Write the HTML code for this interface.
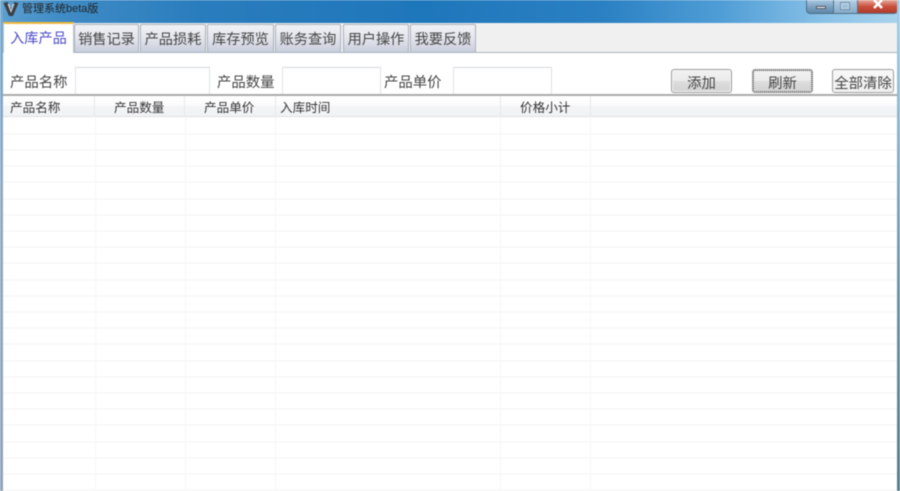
<!DOCTYPE html>
<html lang="zh">
<head>
<meta charset="utf-8">
<title>管理系统beta版</title>
<style>
html,body{margin:0;padding:0;width:900px;height:491px;overflow:hidden;background:#fff}
body{position:relative;font-family:"Liberation Sans","Noto Sans CJK SC",sans-serif;color:#333}
#wrap{left:0;top:0;width:900px;height:491px;filter:blur(.4px)}
div,span{position:absolute;box-sizing:border-box;white-space:nowrap}
#title{left:0;top:0;width:900px;height:23px;background:linear-gradient(90deg,#5c9fcf 0,#3f8cc6 60px,#2a7dbd 200px,#1f77bb 420px,#2a80c2 600px,#4f9dd6 720px,#8cc3e8 830px,#a9d3ee 900px)}
#cap{left:22px;top:2px;font-size:11px;line-height:14px;color:#222}
.lb{left:0;top:0;width:3px;height:491px;background:linear-gradient(180deg,#6fa8d2,#8fa9c4 40%,#8fa3bb);}
.rb{left:897px;top:0;width:3px;height:491px;background:linear-gradient(180deg,#a5cfea,#6d93a8 60%,#567d90);}
#strip{left:3px;top:23px;width:894px;height:30px;background:#f0f0f0;border-bottom:1px solid #a9b4bf}
#client{left:3px;top:53px;width:894px;height:438px;background:#fff}
.tab{top:24px;height:28px;background:linear-gradient(180deg,#f1f2f6 0,#e3e5ec 50%,#c9cddc 100%);border:1px solid #aab1bc;border-bottom:0;border-radius:2px 2px 0 0;font-size:14.2px;line-height:30px;text-align:center;color:#444}
#act{left:3px;top:22px;width:71px;height:31px;background:#fff;border:1px solid #c2c6cc;border-top:2px solid #f0b93c;border-bottom:0;font-size:14.2px;line-height:31px;text-align:center;color:#4a4ac8}
.l{top:74px;font-size:14.4px;line-height:18px;color:#444}
.in{top:67px;height:28px;background:#fff;border:1px solid #dfe2e6;border-bottom:0;border-top-color:#d4d7db}
.btn{top:69px;height:24px;border:1px solid #9a9b9b;border-radius:3px;background:linear-gradient(180deg,#f2f2f2 0,#ebebeb 48%,#dddddd 52%,#d2d2d2 100%);font-size:14.4px;line-height:28px;text-align:center;color:#444;box-shadow:inset 0 0 0 1px #f6f6f6}
#hl{left:3px;top:94px;width:894px;height:2px;background:#ababab}
#hd{left:3px;top:96px;width:894px;height:21px;background:linear-gradient(180deg,#ffffff 0,#fbfbfc 45%,#f3f4f6 55%,#f2f3f5 100%);border-bottom:1px solid #dfe0e2}
.h{top:100px;font-size:12.6px;line-height:16px;color:#333}
.vh{top:96px;width:1px;height:21px;background:#e6e8eb}
.v{top:117px;width:1px;height:374px;background:#f6f6f6}
.r{left:3px;width:894px;height:2px;background:#f8f8f8}
</style>
</head>
<body>
<div id="wrap">
<div id="title"></div>
<svg style="position:absolute;left:3px;top:1px" width="16" height="16" viewBox="0 0 16 16">
<path d="M0.5 2 L4.5 1 L8 7 L11.5 1 L15.5 2 L10 15 L6 15 Z" fill="#3a3e45"/>
<path d="M4.5 3 L6.5 3 L8 9 L9.5 3 L11.5 3 L8 12 Z" fill="#cfd5db"/>
</svg>
<div id="cap">管理系统beta版</div>
<div style="left:806px;top:0;width:92px;height:14px;border:1px solid #4f6f88;border-top:0;border-radius:0 0 4px 4px;background:linear-gradient(180deg,#a9c8e0,#7da3c2 50%,#5f88a8);overflow:hidden">
<div style="left:26px;top:0;width:25px;height:13px;border-left:1px solid #55728a;border-right:1px solid #55728a;background:linear-gradient(180deg,#b5d0e5,#86abc8)"></div>
<div style="left:51px;top:0;width:40px;height:13px;background:linear-gradient(180deg,#e6a89a,#c9503c 50%,#b13a2a)"></div>
<div style="left:9px;top:6px;width:10px;height:3px;background:#fff;border:1px solid #556"></div>
<div style="left:33px;top:2px;width:10px;height:8px;border:1px solid #6f8ea8;box-shadow:inset 0 0 0 1px #c8dcec"></div>
</div>
<svg style="position:absolute;left:871px;top:0" width="14" height="10" viewBox="0 0 14 10"><path d="M3 0 L11 8 M11 0 L3 8" stroke="#fff" stroke-width="2.6" fill="none"/></svg>
<div class="lb"></div><div class="rb"></div>
<div id="strip"></div>
<div id="client"></div>
<div class="tab" style="left:74px;width:65px">销售记录</div>
<div class="tab" style="left:140px;width:66px">产品损耗</div>
<div class="tab" style="left:207px;width:67px">库存预览</div>
<div class="tab" style="left:275px;width:66px">账务查询</div>
<div class="tab" style="left:343px;width:66px">用户操作</div>
<div class="tab" style="left:410px;width:66px">我要反馈</div>
<div id="act">入库产品</div>
<div class="l" style="left:10px">产品名称</div>
<div class="in" style="left:75px;width:135px"></div>
<div class="l" style="left:217px">产品数量</div>
<div class="in" style="left:282px;width:99px"></div>
<div class="l" style="left:384px">产品单价</div>
<div class="in" style="left:453px;width:99px"></div>
<div id="hl"></div>
<div class="btn" style="left:671px;width:61px">添加</div>
<div class="btn" style="left:752px;width:61px;outline:1px dotted #444;outline-offset:-2px">刷新</div>
<div class="btn" style="left:832px;width:62px;background:linear-gradient(180deg,#f8f8f8,#efefef);line-height:28px">全部清除</div>
<div id="hd"></div>
<div class="vh" style="left:94px"></div><div class="vh" style="left:184px"></div><div class="vh" style="left:275px"></div><div class="vh" style="left:500px"></div><div class="vh" style="left:590px"></div>
<div class="h" style="left:10px">产品名称</div>
<div class="h" style="left:114px">产品数量</div>
<div class="h" style="left:204px">产品单价</div>
<div class="h" style="left:280px">入库时间</div>
<div class="h" style="left:520px">价格小计</div>
<div class="v" style="left:95px"></div><div class="v" style="left:185px"></div><div class="v" style="left:275px"></div><div class="v" style="left:500px"></div><div class="v" style="left:590px"></div>
<div class="r" style="top:133px"></div><div class="r" style="top:149px"></div><div class="r" style="top:165px"></div><div class="r" style="top:181px"></div><div class="r" style="top:198px"></div><div class="r" style="top:214px"></div><div class="r" style="top:230px"></div><div class="r" style="top:246px"></div><div class="r" style="top:262px"></div><div class="r" style="top:279px"></div><div class="r" style="top:295px"></div><div class="r" style="top:311px"></div><div class="r" style="top:327px"></div><div class="r" style="top:343px"></div><div class="r" style="top:360px"></div><div class="r" style="top:376px"></div><div class="r" style="top:392px"></div><div class="r" style="top:408px"></div><div class="r" style="top:424px"></div><div class="r" style="top:441px"></div><div class="r" style="top:457px"></div><div class="r" style="top:473px"></div><div class="r" style="top:489px"></div>
</div>
</body>
</html>
